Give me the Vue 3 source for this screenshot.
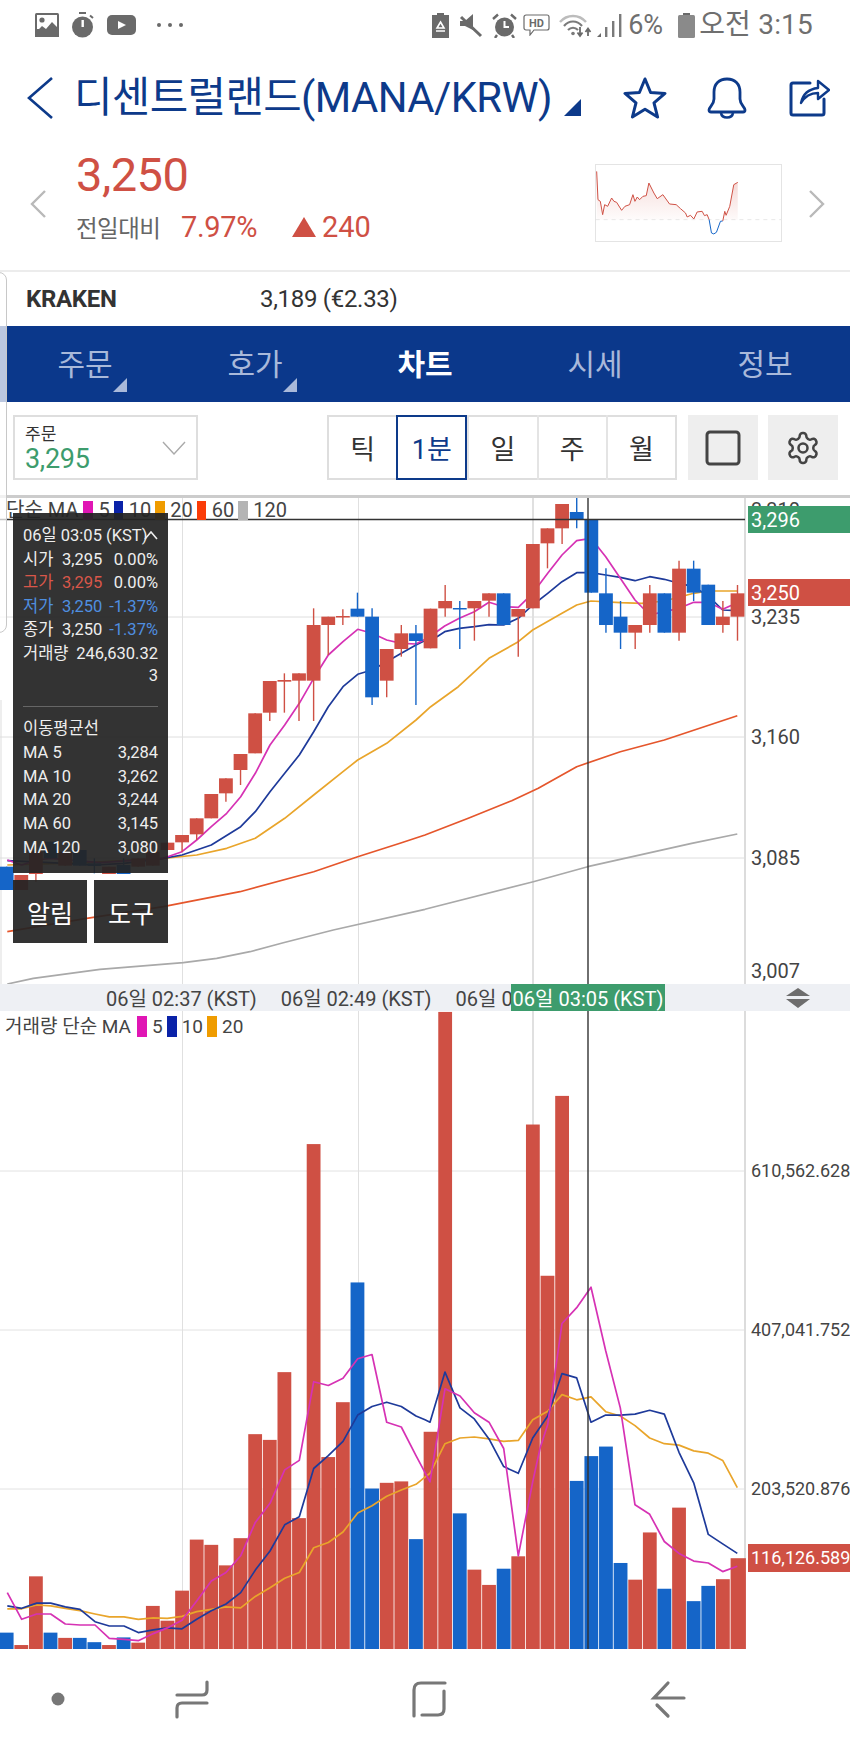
<script setup>
const cx = i => (20 + 43.85 * i) / 3
const py = z => 490 + z / 3
const vy = z => 1000 + z / 2.096
const R = '#cf5044'
const B = '#1565c8'

// [colour, bodyTop, bodyBottom, wickTop, wickBottom] in zoom units
const rawCandles = [
  [B,1130,1200],[R,1155,1200,1155,1200],[R,1085,1152,1085,1175],[B,1055,1105],[R,1085,1127],[B,1080,1127],
  [B,1120,1128,1105,1150],[R,1130,1152],[B,1125,1152,1105,1152],[R,1105,1130],[R,1085,1127],[R,1058,1080],
  [R,1035,1057,1035,1085],[R,985,1033,985,1050],[R,912,985],[R,865,910,865,935],[R,792,840,792,885],[R,670,790],
  [R,573,668,573,693],[R,570,575,550,668],[R,550,572,550,693],[R,405,572,355,693],[R,380,405,380,495],[R,378,381,358,405],
  [B,356,380,308,380],[B,380,622,355,645],[R,477,572,477,622],[R,430,477,405,500],[B,430,453,405,645],[R,356,475],
  [R,333,355,285,380],[B,354,357,333,477],[R,333,355,333,452],[R,310,332,310,380],[B,310,405],[R,357,380,357,500],
  [R,162,355],[R,115,160,115,235],[R,42,115,42,162],[B,66,88,18,115],[B,90,308],[B,310,405,235,428],
  [B,380,428,333,477],[R,405,428,405,477],[R,310,405,285,428],[B,310,428],[R,236,428,212,452],[B,236,308,212,333],
  [B,284,405],[R,380,405,333,428],[R,310,380,285,452]
]
const candles = rawCandles.map((c, i) => {
  const wt = c[3] ?? c[1]
  const wb = c[4] ?? c[2]
  return {
    color: c[0], x: cx(i) - 6.9, w: 13.8, y: py(c[1]), h: Math.max(1.5, (c[2] - c[1]) / 3),
    lx: cx(i), ly1: py(wt), ly2: py(wb)
  }
})

const pts = (arr, fy) => {
  const out = []
  for (let i = 0; i < arr.length; i += 2) out.push((arr[i] / 3).toFixed(1) + ',' + fy(arr[i + 1]).toFixed(1))
  return out.join(' ')
}
const O = 1275
const priceLines = [
  { color: '#a9a9a9', points: pts([22,1482,100,1465,300,1438,550,1418,650,1405,750,1385,850,1358,1000,1320,1275,1258,1600,1175,1763,1130,2075,1060,2212,1032], py) },
  { color: '#e5562c', points: pts([22,1325,260,1285,490,1250,720,1205,941,1145,1073,1100,1200,1060,1275,1035,1405,985,1535,932,1615,895,1730,830,1861,785,1993,750,2212,677], py) },
  { color: '#e9a52b', points: pts([22,1125,260,1118,490,1105,590,1095,680,1075,766,1045,854,985,941,915,1029,845,1073,810,1160,760,1248,690,1292,650,1375,590,1467,505,1555,455,1598,420,1686,370,1730,345,1773,333,1861,338,1925,340,1993,333,2081,310,2125,303,2212,303], py) },
  { color: '#1e3a9a', points: pts([22,1112,150,1118,285,1125,372,1120,490,1105,546,1095,634,1065,722,1010,766,965,810,905,854,850,898,795,941,725,985,650,1029,590,1073,553,1116,540,1160,515,1204,490,1248,465,1289,445,1311,440,1334,425,1378,415,1423,410,1467,404,1511,405,1555,385,1598,345,1643,310,1686,275,1730,248,1773,248,1817,255,1861,262,1905,272,1949,260,1993,268,2037,280,2081,290,2125,318,2168,360,2212,362], py) },
  { color: '#d632b4', points: pts([22,1110,65,1125,110,1110,152,1105,300,1118,490,1105,546,1085,590,1050,634,1010,680,970,722,920,766,850,810,765,854,705,898,640,941,565,985,495,1029,455,1073,418,1116,430,1160,450,1204,460,1248,462,1289,440,1334,408,1378,385,1423,365,1467,337,1511,350,1555,352,1598,310,1643,250,1686,195,1730,152,1773,145,1817,200,1861,265,1905,330,1949,375,1993,365,2037,355,2081,337,2125,337,2168,358,2212,338], py) }
]

const volRaw = [
  [B,1326],[R,1352],[R,1208],[B,1326],[R,1337],[B,1337],[B,1346],[R,1352],[B,1336],[R,1347],
  [R,1270],[R,1301],[R,1238],[R,1131],[R,1142],[R,1185],[R,1128],[R,910],[R,922],[R,780],
  [R,1086],[R,302],[R,958],[R,843],[B,592],[B,1024],[R,1012],[R,1009],[B,1130],[R,905],
  [R,25],[B,1076],[R,1194],[R,1226],[B,1192],[R,1166],[R,261],[R,578],[R,201],[B,1008],
  [B,956],[B,936],[B,1180],[R,1215],[R,1116],[B,1234],[R,1064],[B,1260],[B,1228],[R,1214],[R,1170]
]
const bars = volRaw.map((b, i) => ({
  color: b[0], x: cx(i) - 6.9, w: i === 50 ? 15.3 : 13.8, y: vy(b[1]), h: 1649 - vy(b[1])
}))
const volLines = [
  { color: '#e9a52b', points: pts([22,1276,65,1276,110,1268,152,1270,196,1275,240,1280,285,1287,328,1293,372,1293,415,1298,460,1295,502,1296,546,1292,590,1282,634,1277,678,1272,722,1274,766,1250,810,1232,854,1212,898,1200,941,1148,985,1137,1029,1115,1073,1075,1116,1060,1160,1040,1204,1027,1248,1015,O,1000,O+15,992,O+60,930,O+105,918,O+148,916,O+192,920,O+236,925,O+280,923,O+323,880,O+368,862,O+411,827,O+455,838,O+498,832,O+542,863,O+586,872,O+630,892,O+674,918,O+718,930,O+762,933,O+806,945,O+850,950,O+893,965,O+937,1022], vy) },
  { color: '#1e3a9a', points: pts([22,1270,65,1275,110,1264,152,1264,196,1272,240,1277,285,1303,328,1312,372,1312,415,1326,460,1320,502,1316,546,1318,590,1298,634,1280,678,1266,722,1242,766,1195,810,1155,854,1100,898,1083,941,982,985,955,1029,925,1073,870,1116,852,1160,843,1204,852,1248,872,O,880,O+15,885,O+60,780,O+105,855,O+148,878,O+192,920,O+236,978,O+280,992,O+323,918,O+368,872,O+411,783,O+455,792,O+498,885,O+542,870,O+586,870,O+630,868,O+674,860,O+718,868,O+762,948,O+806,1012,O+850,1120,O+893,1140,O+937,1160], vy) },
  { color: '#d632b4', points: pts([22,1242,65,1298,110,1287,152,1287,196,1308,240,1310,285,1310,328,1338,372,1340,415,1343,460,1328,502,1316,546,1300,590,1260,634,1218,678,1200,722,1165,766,1095,810,1055,854,985,898,965,941,800,985,808,1029,793,1073,752,1116,743,1160,885,1204,895,1248,955,O+15,1010,O+60,815,O+105,830,O+148,865,O+192,885,O+236,940,O+280,1165,O+323,1010,O+345,940,O+368,890,O+411,678,O+455,645,O+498,602,O+542,735,O+586,855,O+630,1058,O+674,1078,O+718,1135,O+762,1160,O+806,1176,O+850,1180,O+893,1198,O+937,1187], vy) }
]

const tabs = [
  { label: '주문', mark: true }, { label: '호가', mark: true }, { label: '차트', active: true },
  { label: '시세' }, { label: '정보' }
]
const periods = [{ label: '틱' }, { label: '1분', active: true }, { label: '일' }, { label: '주' }, { label: '월' }]
const priceLegend = [
  { color: '#e016b4', label: '5' }, { color: '#0a22a8', label: '10' }, { color: '#ef9c00', label: '20' },
  { color: '#fa3c08', label: '60' }, { color: '#b4b4b4', label: '120' }
]
const volLegend = priceLegend.slice(0, 3)
const quotes = [
  { label: '시가', value: '3,295', pct: '0.00%' },
  { label: '고가', value: '3,295', pct: '0.00%', tone: 'red' },
  { label: '저가', value: '3,250', pct: '-1.37%', tone: 'blue', pctTone: 'blue' },
  { label: '종가', value: '3,250', pct: '-1.37%', pctTone: 'blue' }
]
const mas = [['MA 5', '3,284'], ['MA 10', '3,262'], ['MA 20', '3,244'], ['MA 60', '3,145'], ['MA 120', '3,080']]
const grid = [617, 737, 858]
const vGrid = [182.5, 358.5, 533]
const axis = [['3,235', 617], ['3,160', 737], ['3,085', 858], ['3,007', 971]]
const volGrid = [1171, 1330, 1489]
const volAxis = [['610,562.628', 1171], ['407,041.752', 1330], ['203,520.876', 1489]]
</script>

<template>
  <div class="phone">
    <div class="status">
      <div class="status-left">
        <svg width="24" height="24" viewBox="0 0 24 24"><rect x="0" y="0" width="24" height="24" rx="1.5" fill="#6a6a6a"/><rect x="2" y="2" width="20" height="14" fill="#fff"/><circle cx="7" cy="7" r="2.6" fill="#6a6a6a"/><path d="M0 20 L7 13 L11 16 L17 9 L24 16 V24 H0Z" fill="#6a6a6a"/></svg>
        <svg width="22" height="26" viewBox="0 0 22 26"><rect x="7" y="0" width="7" height="2" fill="#6a6a6a"/><circle cx="10.5" cy="15" r="10.5" fill="#6a6a6a"/><rect x="9.5" y="8" width="2.4" height="7" fill="#fff"/><path d="M18 3.5 L21 6" stroke="#6a6a6a" stroke-width="2"/></svg>
        <svg width="29" height="20" viewBox="0 0 29 20"><rect width="29" height="20" rx="5" fill="#6a6a6a"/><path d="M11 6 L19 10 L11 14Z" fill="#fff"/></svg>
        <div class="dots"><i></i><i></i><i></i></div>
      </div>
      <div class="status-right">
        <svg class="s1" width="17" height="25" viewBox="0 0 17 25"><path d="M5 0H12V2H17V25H0V2H5Z" fill="#6a6a6a"/><path d="M8.5 9 L12 15 H5Z M4 18H13" stroke="#fff" stroke-width="1.6" fill="none"/></svg>
        <svg class="s2" width="24" height="25" viewBox="0 0 24 25"><path d="M1 8H6L14 1V17L6 13H1Z" fill="#6a6a6a"/><path d="M2 4 L22 23" stroke="#6a6a6a" stroke-width="3"/></svg>
        <svg class="s3" width="25" height="25" viewBox="0 0 25 25"><circle cx="12.5" cy="14" r="9.5" fill="#6a6a6a"/><path d="M12.5 8V14H17" stroke="#fff" stroke-width="2" fill="none"/><path d="M1 6 L6 1.5 M24 6 L19 1.5 M5 22 L3 25 M20 22 L22 25" stroke="#6a6a6a" stroke-width="2.4"/></svg>
        <svg class="s4" width="27" height="22" viewBox="0 0 27 22"><path d="M3 1H24A2 2 0 0 1 26 3V14A2 2 0 0 1 24 16H11L7 21V16H3A2 2 0 0 1 1 14V3A2 2 0 0 1 3 1Z" fill="none" stroke="#6a6a6a" stroke-width="1.2"/><text x="13.5" y="13" class="hd">HD</text></svg>
        <svg class="s5" width="33" height="25" viewBox="0 0 33 25"><path d="M1 9 C8 1 20 1 27 9" fill="none" stroke="#bcbcbc" stroke-width="2.4"/><path d="M5 13 C10 7 18 7 23 13 M9 17 C12 14 16 14 19 17" fill="none" stroke="#7a7a7a" stroke-width="2.2"/><circle cx="14" cy="20.5" r="1.8" fill="#7a7a7a"/><path d="M21 14 V22 M18.5 19.5 L21 23 L23.5 19.5 M29 23 V16 M26.5 19 L29 15.5 L31.5 19" fill="none" stroke="#6a6a6a" stroke-width="1.8"/></svg>
        <svg class="s6" width="25" height="24" viewBox="0 0 25 24"><path d="M0 24 L4 20 V24Z" fill="#6a6a6a"/><rect x="8" y="14" width="2.4" height="10" fill="#7a7a7a"/><rect x="15" y="8" width="2.4" height="16" fill="#7a7a7a"/><rect x="22" y="1" width="2.4" height="23" fill="#7a7a7a"/></svg>
        <span class="pct">6%</span>
        <svg class="s7" width="17" height="25" viewBox="0 0 17 25"><rect x="5" y="0" width="7" height="3" fill="#6a6a6a"/><rect x="0" y="2" width="17" height="23" rx="1.5" fill="#8a8a8a"/></svg>
        <span class="clock">오전 3:15</span>
      </div>
    </div>

    <div class="header">
      <svg class="back" width="26" height="42" viewBox="0 0 26 42"><path d="M25 1 L2 21 L25 41" fill="none" stroke="#0d3a8a" stroke-width="2.6"/></svg>
      <span class="title">디센트럴랜드(MANA/KRW)</span>
      <svg class="title-mark" width="17" height="17" viewBox="0 0 17 17"><path d="M17 0V17H0Z" fill="#0d3a8a"/></svg>
      <svg class="star" width="44" height="42" viewBox="0 0 44 42"><path d="M22 2 L27.6 15.5 L42 16.4 L31 25.8 L34.6 40 L22 32.2 L9.4 40 L13 25.8 L2 16.4 L16.4 15.5Z" fill="none" stroke="#0d3a8a" stroke-width="3" stroke-linejoin="round"/></svg>
      <svg class="bell" width="40" height="42" viewBox="0 0 40 42"><path d="M2 33 C2 30 7 28 7 22 V15 C7 7 12 2 20 2 C28 2 33 7 33 15 V22 C33 28 38 30 38 33 C38 34.500 37 35 36 35 H4 C3 35 2 34.500 2 33Z" fill="none" stroke="#0d3a8a" stroke-width="2.8" stroke-linejoin="round"/><path d="M14 36 C15 42 25 42 26 36" fill="none" stroke="#0d3a8a" stroke-width="2.6"/></svg>
      <svg class="share" width="42" height="40" viewBox="0 0 42 40"><path d="M22 5 H5 A2 2 0 0 0 3 7 V35 A2 2 0 0 0 5 37 H34 A2 2 0 0 0 36 35 V21" fill="none" stroke="#0d3a8a" stroke-width="3" stroke-linecap="round"/><path d="M13 25 C15 15 21 11 30 10 V3 L41 12 L30 21 V15 C22 15 17 18 13 25Z" fill="#fff" stroke="#0d3a8a" stroke-width="2.4" stroke-linejoin="round"/></svg>
    </div>

    <div class="price">
      <svg class="nav-chev" width="16" height="28" viewBox="0 0 16 28"><path d="M15 1 L2 14 L15 27" fill="none" stroke="#b9b9b9" stroke-width="2.4"/></svg>
      <div class="price-main">
        <div class="big">3,250</div>
        <div class="delta">
          <span class="delta-label">전일대비</span>
          <span class="delta-pct">7.97%</span>
          <svg class="up" width="24" height="20" viewBox="0 0 24 20"><path d="M12 0 L24 20 H0Z" fill="#cf5044"/></svg>
          <span class="delta-val">240</span>
        </div>
      </div>
      <div class="mini">
        <svg width="186" height="78" viewBox="168 313 559 234">
          <defs>
            <linearGradient id="miniFill" x1="0" y1="0" x2="0" y2="1">
              <stop offset="0" stop-color="#cf5044" stop-opacity=".22"/>
              <stop offset="1" stop-color="#cf5044" stop-opacity=".02"/>
            </linearGradient>
          </defs>
          <path d="M173 480 L173 335 L177 420 L184 425 L191 465 L197 435 L206 440 L218 415 L225 425 L233 428 L248 452 L258 440 L272 435 L282 405 L288 425 L295 412 L302 420 L312 410 L322 408 L330 370 L345 400 L355 417 L372 405 L392 433 L412 435 L425 447 L440 460 L445 472 L455 467 L465 478 L475 457 L490 455 L497 468 L505 465 L511 480Z" fill="url(#miniFill)"/>
          <path d="M552 484 L558 455 L562 467 L573 440 L585 375 L597 368 V480 H552Z" fill="url(#miniFill)"/>
          <path d="M170 480 H727" stroke="#ddd" stroke-width="2" stroke-dasharray="12 12"/>
          <polyline points="173,335 177,420 184,425 191,465 197,435 206,440 218,415 225,425 233,428 248,452 258,440 272,435 282,405 288,425 295,412 302,420 312,410 322,408 330,370 345,400 355,417 372,405 392,433 412,435 425,447 440,460 445,472 455,467 465,478 475,457 490,455 497,468 505,465 511,480" fill="none" stroke="#cf5044" stroke-width="3"/>
          <polyline points="511,480 518,520 525,523 533,518 545,485 552,484" fill="none" stroke="#1565c8" stroke-width="3"/>
          <polyline points="552,484 558,455 562,467 573,440 585,375 597,368" fill="none" stroke="#cf5044" stroke-width="3"/>
        </svg>
      </div>
      <svg class="nav-chev" width="16" height="28" viewBox="0 0 16 28"><path d="M1 1 L14 14 L1 27" fill="none" stroke="#b9b9b9" stroke-width="2.4"/></svg>
    </div>

    <div class="kraken">
      <b>KRAKEN</b>
      <span>3,189 (€2.33)</span>
    </div>

    <div class="tabs">
      <div v-for="t in tabs" :key="t.label" class="tab" :class="{ on: t.active }">
        {{ t.label }}
        <svg v-if="t.mark" class="tab-mark" width="14" height="14" viewBox="0 0 14 14"><path d="M14 0V14H0Z" fill="#a9b9da"/></svg>
      </div>
    </div>

    <div class="toolbar">
      <div class="select">
        <div class="select-text">
          <span class="select-label">주문</span>
          <span class="select-val">3,295</span>
        </div>
        <svg width="24" height="14" viewBox="0 0 24 14"><path d="M1 1 L12 13 L23 1" fill="none" stroke="#aaa" stroke-width="1.4"/></svg>
      </div>
      <div class="seg">
        <div v-for="p in periods" :key="p.label" class="seg-item" :class="{ on: p.active }">{{ p.label }}</div>
      </div>
      <div class="icon-btn">
        <svg width="36" height="36" viewBox="0 0 36 36"><rect x="2" y="2" width="32" height="32" rx="3" fill="none" stroke="#444" stroke-width="3"/></svg>
      </div>
      <div class="icon-btn">
        <svg width="36" height="36" viewBox="0 0 24 24" fill="none" stroke="#444" stroke-width="1.7"><path d="M12.22 2h-.44a2 2 0 0 0-2 2v.18a2 2 0 0 1-1 1.73l-.43.25a2 2 0 0 1-2 0l-.15-.08a2 2 0 0 0-2.730.73l-.22.38a2 2 0 0 0 .73 2.730l.15.1a2 2 0 0 1 1 1.72v.51a2 2 0 0 1-1 1.74l-.15.09a2 2 0 0 0-.73 2.730l.22.38a2 2 0 0 0 2.730.73l.15-.08a2 2 0 0 1 2 0l.43.25a2 2 0 0 1 1 1.73V20a2 2 0 0 0 2 2h.44a2 2 0 0 0 2-2v-.18a2 2 0 0 1 1-1.73l.43-.25a2 2 0 0 1 2 0l.15.08a2 2 0 0 0 2.730-.73l.22-.39a2 2 0 0 0-.73-2.730l-.15-.08a2 2 0 0 1-1-1.74v-.5a2 2 0 0 1 1-1.74l.15-.09a2 2 0 0 0 .73-2.730l-.22-.38a2 2 0 0 0-2.730-.73l-.15.08a2 2 0 0 1-2 0l-.43-.25a2 2 0 0 1-1-1.73V4a2 2 0 0 0-2-2z"/><circle cx="12" cy="12" r="3"/></svg>
      </div>
    </div>

    <div class="chart">
      <svg class="plot" width="850" height="486" viewBox="0 498 850 486">
        <line x1="1" y1="700" x2="1" y2="984" stroke="#ddd"/>
        <line v-for="y in grid" :key="y" x1="0" :y1="y" x2="745" :y2="y" stroke="#dedede"/>
        <line v-for="x in vGrid" :key="x" :x1="x" y1="498" :x2="x" y2="984" stroke="#e0e0e0" :stroke-width="x > 500 ? 2 : 1"/>
        <line x1="745" y1="498" x2="745" y2="984" stroke="#dcdcdc" stroke-width="2"/>
        <polyline v-for="l in priceLines" :key="l.color" :points="l.points" fill="none" :stroke="l.color" stroke-width="1.7" stroke-linejoin="round"/>
        <g v-for="(c, i) in candles" :key="i">
          <line :x1="c.lx" :y1="c.ly1" :x2="c.lx" :y2="c.ly2" :stroke="c.color" stroke-width="1.4"/>
          <rect :x="c.x" :y="c.y" :width="c.w" :height="c.h" :fill="c.color"/>
        </g>
        <line x1="0" y1="519.5" x2="745" y2="519.5" stroke="#333" stroke-width="1.4"/>
        <line x1="588" y1="498" x2="588" y2="984" stroke="#333" stroke-width="1.4"/>
        <text class="ax" x="751" y="517">3,310</text>
        <rect x="748" y="506" width="102" height="27" fill="#3d9c6d"/>
        <text class="ax light" x="751" y="526.500">3,296</text>
        <text v-for="a in axis" :key="a[0]" class="ax" x="751" :y="a[1] + 7">{{ a[0] }}</text>
        <rect x="748" y="579" width="102" height="27" fill="#cf5044"/>
        <text class="ax light" x="751" y="599.500">3,250</text>
      </svg>
      <div class="legend">
        <span class="legend-name">단순 MA</span>
        <template v-for="l in priceLegend" :key="l.label">
          <i class="swatch" :style="{ background: l.color }"></i><span>{{ l.label }}</span>
        </template>
      </div>
      <div class="tip">
        <div class="tip-head"><span>06일 03:05 (KST)</span><svg width="14" height="9" viewBox="0 0 14 9"><path d="M1 8 L7 1 L13 8" fill="none" stroke="#eee" stroke-width="1.6"/></svg></div>
        <div v-for="q in quotes" :key="q.label" class="tip-row">
          <span :class="q.tone">{{ q.label }}</span>
          <span :class="q.tone">{{ q.value }}</span>
          <span class="tip-pct" :class="q.pctTone">{{ q.pct }}</span>
        </div>
        <div class="tip-vol"><span>거래량</span><span>246,630.32</span></div>
        <div class="tip-wrap">3</div>
        <div class="tip-sep"></div>
        <div class="tip-title">이동평균선</div>
        <div v-for="m in mas" :key="m[0]" class="tip-ma"><span>{{ m[0] }}</span><span>{{ m[1] }}</span></div>
      </div>
      <div class="actions">
        <div class="action">알림</div>
        <div class="action">도구</div>
      </div>
    </div>

    <div class="timebar">
      <span>06일 02:37 (KST)</span>
      <span>06일 02:49 (KST)</span>
      <span>06일 03:01 (KST)</span>
      <svg class="resize" width="24" height="20" viewBox="0 0 24 20"><path d="M12 0 L24 8 H0Z M0 11 H24 L12 20Z" fill="#6d6d6d"/></svg>
      <span class="time-tag">06일 03:05 (KST)</span>
    </div>

    <div class="volume">
      <svg class="plot" width="850" height="639" viewBox="0 1011 850 639">
        <line v-for="y in volGrid" :key="y" x1="0" :y1="y" x2="745" :y2="y" stroke="#e2e2e2"/>
        <line v-for="x in vGrid" :key="x" :x1="x" y1="1011" :x2="x" y2="1649" stroke="#e0e0e0" :stroke-width="x > 500 ? 2 : 1"/>
        <line x1="745" y1="1011" x2="745" y2="1649" stroke="#dcdcdc" stroke-width="2"/>
        <rect v-for="(b, i) in bars" :key="i" :x="b.x" :y="b.y" :width="b.w" :height="b.h" :fill="b.color"/>
        <polyline v-for="l in volLines" :key="l.color" :points="l.points" fill="none" :stroke="l.color" stroke-width="1.7" stroke-linejoin="round"/>
        <line x1="588" y1="1011" x2="588" y2="1649" stroke="#333" stroke-width="1.4"/>
        <text v-for="a in volAxis" :key="a[0]" class="ax vol" x="751" :y="a[1] + 6">{{ a[0] }}</text>
        <rect x="748" y="1544" width="102" height="28" fill="#cf5044"/>
        <text class="ax vol light" x="751" y="1564">116,126.589</text>
      </svg>
      <div class="legend vol-legend">
        <span class="legend-name">거래량 단순 MA</span>
        <template v-for="l in volLegend" :key="l.label">
          <i class="swatch" :style="{ background: l.color }"></i><span>{{ l.label }}</span>
        </template>
      </div>
    </div>

    <div class="navbar">
      <svg width="850" height="98" viewBox="0 1650 850 98">
        <ellipse cx="58" cy="1699" rx="6.500" ry="6.500" fill="#777"/>
        <g fill="none" stroke="#777" stroke-width="3.200" stroke-linecap="round">
          <path d="M207 1682 V1690 Q207 1695 202 1695 H177"/>
          <path d="M207 1703 H182 Q177 1703 177 1708 V1717"/>
          <path d="M445 1683 H421 Q414 1683 414 1690 V1716"/>
          <path d="M444 1691 V1709 Q444 1715 438 1715 H422"/>
          <path d="M668 1683 L654 1698 H684"/>
          <path d="M657 1705 L668 1716"/>
        </g>
      </svg>
    </div>

    <div class="edge"></div>
  </div>
</template>

<style scoped>
.phone {
  position: relative;
  width: 850px;
  height: 1748px;
  overflow: hidden;
  background: #fff;
  font-family: Roboto, "Noto Sans CJK KR", sans-serif;
  color: #333;
}
.status {
  height: 50px;
  padding: 0 37px 0 35px;
  box-sizing: border-box;
  display: flex;
  align-items: center;
  justify-content: space-between;
}
.status-left { display: flex; align-items: center; gap: 13px; }
.dots { display: flex; gap: 7px; margin-left: 8px; }
.dots i { width: 4px; height: 4px; border-radius: 50%; background: #6a6a6a; }
.status-right { display: flex; align-items: center; color: #6f6f6f; }
.s2, .s3, .s4, .s5, .s6 { margin-left: 10px; }
.s3 { margin-left: 9px; }
.s4 { margin-left: 6px; }
.hd { font: 700 11px Roboto, sans-serif; text-anchor: middle; fill: #6a6a6a; }
.s5 { margin-left: 9px; }
.s6 { margin-left: 5px; }
.pct { font-size: 27px; margin-left: 6px; line-height: 1; }
.s7 { margin-left: 15px; }
.clock { font-size: 28px; margin-left: 4px; line-height: 1; letter-spacing: .2px; white-space: nowrap; }

.header {
  height: 96px;
  display: flex;
  align-items: center;
  padding-left: 27px;
  box-sizing: border-box;
  color: #0d3a8a;
}
.title { font-size: 41.800px; margin-left: 21px; letter-spacing: -.6px; white-space: nowrap; line-height: 1; width: 478px; }
.title-mark { margin: 18px 0 0 12px; }
.star { margin-left: 42px; }
.bell { margin-left: 40px; }
.share { margin-left: 41px; }

.price {
  height: 124px;
  display: flex;
  align-items: flex-start;
  padding-left: 30px;
  box-sizing: border-box;
}
.nav-chev { flex: none; margin-top: 44px; }
.price-main { margin-left: 30px; width: 520px; }
.big { font-size: 47px; line-height: 54px; color: #cf5044; letter-spacing: -.5px; margin-top: 2px; }
.delta { display: flex; align-items: center; height: 40px; margin-top: 5px; color: #cf5044; font-size: 29px; }
.delta-label { font-size: 23.500px; color: #666; width: 105px; letter-spacing: -.5px; white-space: nowrap; }
.delta-pct { width: 111px; letter-spacing: -.3px; }
.up { margin-right: 6px; }
.mini { flex: none; width: 187px; height: 78px; margin: 18px 0 0 -1px; box-sizing: border-box; border: 1px solid #e4e4e4; }
.mini svg { display: block; margin: -1px; }
.price .nav-chev:last-child { margin-left: 27px; }

.kraken {
  height: 56px;
  border-top: 2px solid #ececec;
  box-sizing: border-box;
  display: flex;
  align-items: center;
  padding-left: 26px;
  font-size: 24px;
  color: #333;
  letter-spacing: -.3px;
}
.kraken b { width: 234px; font-weight: 700; }

.tabs {
  height: 76px;
  background: #0b388b;
  display: grid;
  grid-template-columns: repeat(5, 170px);
}
.tab {
  position: relative;
  display: flex;
  align-items: center;
  justify-content: center;
  font-size: 30px;
  color: #a9b9da;
  padding-bottom: 4px;
  box-sizing: border-box;
}
.tab.on { color: #fff; font-weight: 700; }
.tab-mark { position: absolute; left: 113px; top: 52px; }

.toolbar {
  height: 93px;
  display: flex;
  align-items: flex-start;
  padding: 13px 0 0 13px;
  box-sizing: border-box;
}
.select {
  width: 185px;
  height: 65px;
  border: 2px solid #dedede;
  box-sizing: border-box;
  display: flex;
  align-items: center;
  justify-content: space-between;
  padding: 0 10px 0 10px;
}
.select-text { display: flex; flex-direction: column; }
.select-label { font-size: 17px; line-height: 22px; color: #333; }
.select-val { font-size: 27px; line-height: 28px; color: #3d9c6d; letter-spacing: -.3px; }
.seg {
  margin-left: 129px;
  display: flex;
  width: 350px;
  height: 65px;
  border: 2px solid #dedede;
  box-sizing: border-box;
}
.seg-item {
  flex: 1 1 0;
  box-sizing: border-box;
  margin: -2px 0;
  border-left: 2px solid #e4e4e4;
  display: flex;
  align-items: center;
  justify-content: center;
  font-size: 27px;
  color: #333;
}
.seg-item:first-child { border-left: 0; }
.seg-item.on { border: 2px solid #0d3a8a; color: #0d3a8a; }
.icon-btn {
  width: 70px;
  height: 65px;
  margin-left: 11px;
  background: #eee;
  display: flex;
  align-items: center;
  justify-content: center;
}
.icon-btn + .icon-btn { margin-left: 10px; }

.chart {
  position: relative;
  height: 489px;
  border-top: 3px solid #ccc;
  box-sizing: border-box;
}
.plot { display: block; }
.ax { font: 20px Roboto, "Noto Sans CJK KR", sans-serif; fill: #444; }
.ax.vol { font-size: 18px; }
.ax.light { fill: #fff; }
.legend {
  position: absolute;
  left: 6px;
  top: 2px;
  display: flex;
  align-items: center;
  font-size: 20px;
  line-height: 20px;
  color: #444;
  white-space: nowrap;
}
.legend-name { margin-right: 1px; }
.swatch { flex: none; width: 9.500px; height: 19px; margin: 0 5.500px 0 4px; }
.tip {
  position: absolute;
  left: 13px;
  top: 15px;
  width: 155px;
  height: 360px;
  box-sizing: border-box;
  padding: 11px 10px 0;
  background: rgba(35, 35, 35, .93);
  color: #eee;
  font-size: 16.500px;
  line-height: 23.600px;
}
.tip-head { display: flex; justify-content: space-between; align-items: center; white-space: nowrap; }
.tip-head svg { margin-left: -8px; flex: none; }
.tip-row { display: grid; grid-template-columns: 39px auto 1fr; white-space: nowrap; }
.tip-pct { text-align: right; }
.red { color: #d9574a; }
.blue { color: #4f8fe0; }
.tip-vol { display: flex; justify-content: space-between; white-space: nowrap; }
.tip-wrap { text-align: right; line-height: 20px; }
.tip-sep { height: 1px; background: #666; margin: 20px 0 10px; }
.tip-title { margin-bottom: 1px; }
.tip-ma { display: flex; justify-content: space-between; }
.actions { position: absolute; left: 13px; top: 382px; display: flex; gap: 7px; }
.action {
  width: 74px;
  height: 63px;
  background: rgba(35, 35, 35, .93);
  color: #fff;
  font-size: 25px;
  display: flex;
  align-items: center;
  justify-content: center;
}

.timebar {
  position: relative;
  height: 27px;
  background: #eef0f4;
  display: flex;
  align-items: center;
  padding-left: 106px;
  box-sizing: border-box;
  gap: 24px;
  font-size: 20px;
  color: #444;
  white-space: nowrap;
  overflow: hidden;
}
.resize { position: absolute; left: 786px; top: 4px; }
.time-tag {
  position: absolute;
  left: 511px;
  top: 0;
  width: 154px;
  height: 27px;
  background: #3d9c6d;
  color: #fff;
  display: flex;
  align-items: center;
  justify-content: center;
}

.volume { position: relative; height: 639px; }
.vol-legend { left: 5px; top: 5px; font-size: 19px; }
.vol-legend .legend-name { margin-right: 2px; }
.vol-legend .swatch { width: 10px; height: 21px; margin: 0 5px 0 4px; }

.navbar { height: 98px; }
.navbar svg { display: block; }

.edge {
  position: absolute;
  left: -12px;
  top: 272px;
  width: 19px;
  height: 361px;
  box-sizing: border-box;
  border: 1px solid #c8c8c8;
  border-radius: 8px;
  background: rgba(255, 255, 255, .72);
}
</style>
